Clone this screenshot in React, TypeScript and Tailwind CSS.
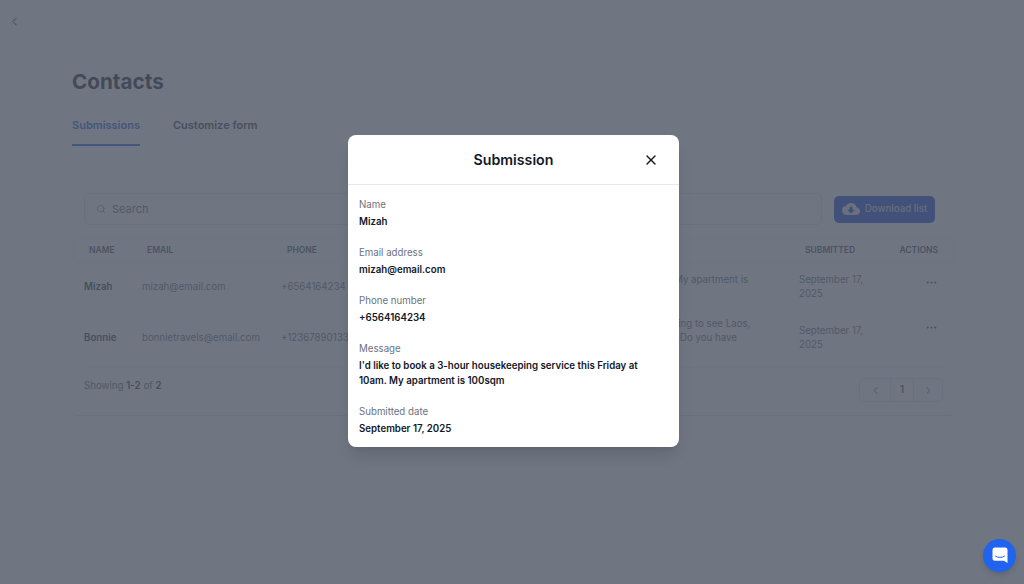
import { ChevronLeft, ChevronRight, Ellipsis, Search, X } from "lucide-react";
import { MdCloudDownload } from "react-icons/md";

const cols = "grid grid-cols-[58px_139px_134px_384px_90px_49px]";

function Field({ label, value, className }: { label: string; value: React.ReactNode; className?: string }) {
  return (
    <div className={className}>
      <div className="text-[9.7px] leading-[15px] text-[#6b7280]">{label}</div>
      <div className="mt-[2px] text-[9.7px] leading-[15px] font-semibold text-[#111827]">{value}</div>
    </div>
  );
}

export default function App() {
  return (
    <div className="relative h-[584px] w-[1024px] overflow-hidden bg-white font-['Inter',sans-serif] text-[#111827]">
      <div className="px-[8px] pt-[15px] text-[#111827]">
        <ChevronLeft size={13} strokeWidth={1.75} />
      </div>

      <main className="ml-[72px] w-[882px]">
        <h1 className="mt-[39px] text-[20.7px] leading-[30px] font-bold text-[#1f2937]">Contacts</h1>

        <nav className="mt-[20px] flex gap-[33px] text-[11px] font-semibold">
          <div className="border-b-2 border-[#2563eb] pb-[11px] leading-[16px] text-[#2563eb]">Submissions</div>
          <div className="leading-[16px] text-[#374151]">Customize form</div>
        </nav>

        <section className="mt-[47px] rounded-b-md border-b border-[#e5e7eb] px-[12px] pb-[13px]">
          <div className="flex items-center gap-[12px]">
            <div className="flex h-[32px] w-[738px] items-center gap-[6px] rounded-[6px] border border-[#e5e7eb] pl-[11px] text-[#6b7280]">
              <Search size={10} strokeWidth={1.5} />
              <span className="text-[11px]">Search</span>
            </div>
            <button className="flex h-[27px] w-[101px] items-center justify-center gap-[5px] rounded-[5px] bg-[#1d4ed8] text-[9.7px] font-medium text-[#d1d5db]">
              <MdCloudDownload size={18} className="text-[#e5e7eb]" />
              Download list
            </button>
          </div>

          <div className={`${cols} -mx-[12px] mt-[13px] h-[25px] items-center rounded-[5px] border border-[#f3f4f6] px-[11px] text-[8.5px] font-semibold text-[#4b5563]`}>
            <div className="pl-[5px]">NAME</div>
            <div className="pl-[5px]">EMAIL</div>
            <div className="pl-[6px]">PHONE</div>
            <div />
            <div className="pl-[6px]">SUBMITTED</div>
            <div className="text-right">ACTIONS</div>
          </div>

          <div className={`${cols} mt-[1px] h-[45px] items-center text-[9.7px] leading-[14px] text-[#6b7280]`}>
            <div className="font-semibold text-[#374151]">Mizah</div>
            <div>mizah@email.com</div>
            <div>+6564164234</div>
            <div className="pl-[132px] whitespace-nowrap">
              service this Friday at 10am. My apartment is
              <br />
              100sqm
            </div>
            <div>
              September 17,
              <br />
              2025
            </div>
            <div className="flex justify-end self-start pt-[12px] text-[#4b5563]">
              <Ellipsis size={13} strokeWidth={2} />
            </div>
          </div>

          <div className={`${cols} h-[59px] items-center border-b border-[#f3f4f6] text-[9.7px] leading-[14px] text-[#6b7280]`}>
            <div className="font-semibold text-[#374151]">Bonnie</div>
            <div>bonnietravels@email.com</div>
            <div>+12367890133</div>
            <div className="pl-[120px] whitespace-nowrap">
              Hello, my family and I are planning to see Laos,
              <br />
              We would love some guidance. Do you have
              <br />
              any tours?
            </div>
            <div>
              September 17,
              <br />
              2025
            </div>
            <div className="flex justify-end self-start pt-[12px] text-[#4b5563]">
              <Ellipsis size={13} strokeWidth={2} />
            </div>
          </div>

          <div className="mt-[10px] flex items-start justify-between">
            <div className="mt-[1px] text-[9.7px] leading-[14px] text-[#6b7280]">
              Showing <span className="font-semibold text-[#374151]">1-2</span> of{" "}
              <span className="font-semibold text-[#374151]">2</span>
            </div>
            <div className="-mr-[1px] flex h-[24px] w-[84px] items-center rounded-[5px] border border-[#e5e7eb] text-[#4b5563]">
              <div className="flex h-full w-[31px] items-center justify-center border-r border-[#e5e7eb]">
                <ChevronLeft size={11} strokeWidth={2} />
              </div>
              <div className="flex h-full w-[23px] items-center justify-center border-r border-[#e5e7eb] text-[9.7px] font-semibold">1</div>
              <div className="flex h-full flex-1 items-center justify-center">
                <ChevronRight size={11} strokeWidth={2} />
              </div>
            </div>
          </div>
        </section>
      </main>

      <div className="absolute inset-0 bg-[#4b5261]/80" />

      <div className="absolute inset-0 flex items-center justify-center pb-[2px] pl-[3px]">
        <div className="w-[331px] rounded-[8px] bg-white shadow-lg">
          <header className="relative flex h-[50px] items-center justify-center border-b border-[#e5e7eb]">
            <h2 className="text-[14.2px] font-semibold text-[#111827]">Submission</h2>
            <X size={16} strokeWidth={2} className="absolute right-[20px] text-[#111827]" />
          </header>
          <div className="pt-[12px] pr-[29px] pb-[11px] pl-[11px]">
            <Field label="Name" value="Mizah" />
            <Field className="mt-[16px]" label="Email address" value="mizah@email.com" />
            <Field className="mt-[16px]" label="Phone number" value="+6564164234" />
            <Field
              className="mt-[16px]"
              label="Message"
              value="I'd like to book a 3-hour housekeeping service this Friday at 10am. My apartment is 100sqm"
            />
            <Field className="mt-[16px]" label="Submitted date" value="September 17, 2025" />
          </div>
        </div>
      </div>

      <button className="absolute right-[8px] bottom-[12px] flex h-[33px] w-[33px] items-center justify-center rounded-full bg-[#1f63ee] shadow-md">
        <svg width="16" height="17" viewBox="0 0 16 17" fill="none">
          <path d="M3 0.5h10a2.5 2.5 0 0 1 2.5 2.5v13l-3.5-2.2H3A2.5 2.5 0 0 1 .5 11.3V3A2.5 2.5 0 0 1 3 .5z" fill="#fff" />
          <path d="M3.5 9.2c2.6 1.7 6.4 1.7 9 0" stroke="#1f63ee" strokeWidth="1" strokeLinecap="round" />
        </svg>
      </button>
    </div>
  );
}
